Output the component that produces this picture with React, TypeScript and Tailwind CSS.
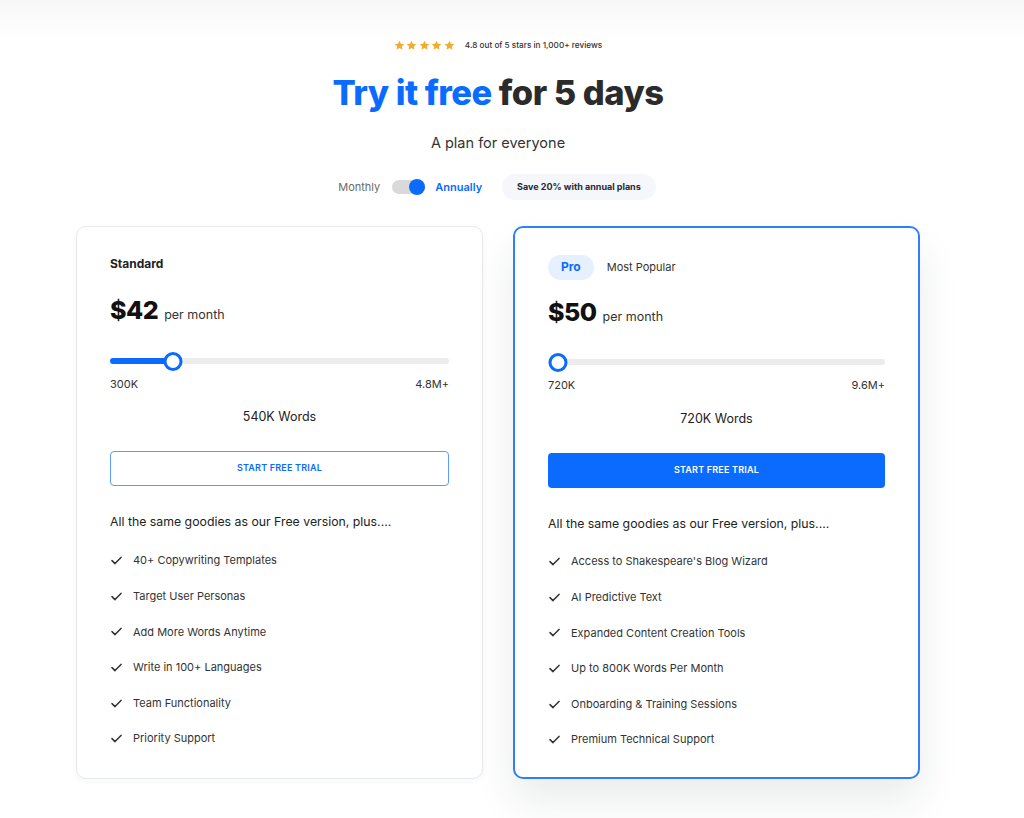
import React from "react";

function Star() {
  return (
    <svg width="11" height="11" viewBox="0 0 24 24" fill="#f7a928">
      <path d="M12 1.5l3.1 6.6 7.2.9-5.3 5 1.4 7.1L12 17.6 5.6 21.1 7 14 1.7 9l7.2-.9z" />
    </svg>
  );
}

function Check() {
  return (
    <svg width="11" height="9" viewBox="0 0 11 9" fill="none">
      <path d="M1 4.6l3 3 6-6.2" stroke="#333" strokeWidth="1.5" strokeLinecap="round" strokeLinejoin="round" />
    </svg>
  );
}

function Slider({ pct, min, max }: { pct: number; min: string; max: string }) {
  return (
    <div className="flex flex-col">
      <div className="relative h-[20px] flex items-center">
        <div className="w-full h-[6px] rounded-full bg-[#ececec]" />
        {pct > 0 && (
          <div className="absolute left-0 h-[6px] rounded-full bg-[#0b6bff]" style={{ width: `calc(${pct}% + 10px)` }} />
        )}
        <div
          className="absolute w-[19px] h-[19px] rounded-full bg-white border-[3px] border-[#0b6bff] -translate-x-1/2"
          style={{ left: `calc(${pct}% + 10px)` }}
        />
      </div>
      <div className="flex justify-between mt-[5px] text-[11px] text-[#333]">
        <span>{min}</span>
        <span>{max}</span>
      </div>
    </div>
  );
}

type Plan = {
  pro: boolean;
  price: string;
  pct: number;
  min: string;
  max: string;
  words: string;
  items: string[];
};

function Card({ p }: { p: Plan }) {
  return (
    <div
      className={
        p.pro
          ? "w-[407px] rounded-[10px] border-2 border-[#2f80f7] bg-white px-[33px] pt-[27px] pb-[19px] shadow-[0_22px_40px_rgba(30,40,60,0.09)]"
          : "w-[407px] rounded-[10px] border border-[#e6eaee] bg-white px-[33px] pt-[29px] pb-[21px] shadow-[0_2px_6px_rgba(30,40,60,0.04)]"
      }
    >
      {p.pro ? (
        <div className="flex items-center h-[25px]">
          <span className="h-[25px] px-[13px] rounded-full bg-[#e7f0fe] text-[#0b6bff] text-[12px] font-bold flex items-center">Pro</span>
          <span className="ml-[13px] text-[11px] text-[#333]">Most Popular</span>
        </div>
      ) : (
        <div className="h-[16px] flex items-center text-[12px] font-bold text-[#222]">Standard</div>
      )}
      <div className={p.pro ? "mt-[14px] flex items-baseline" : "mt-[20px] flex items-baseline"}>
        <span className="text-[25px] font-extrabold text-[#111] tracking-[-0.5px]">{p.price}</span>
        <span className="ml-[6px] text-[12.5px] text-[#333]">per month</span>
      </div>
      <div className={p.pro ? "mt-[21px]" : "mt-[22px]"}>
        <Slider pct={p.pct} min={p.min} max={p.max} />
      </div>
      <div className={p.pro ? "mt-[16px] text-center text-[12.5px] text-[#222]" : "mt-[15px] text-center text-[12.5px] text-[#222]"}>
        {p.words}
      </div>
      <button
        className={
          p.pro
            ? "mt-[24px] w-full h-[35px] rounded-[4px] bg-[#0b6bff] text-white text-[9px] font-semibold tracking-[0.2px]"
            : "mt-[24px] w-full h-[35px] rounded-[4px] border border-[#5a9bff] bg-white text-[#0b6bff] text-[9px] font-semibold tracking-[0.2px]"
        }
      >
        START FREE TRIAL
      </button>
      <div className="mt-[27px] text-[12.3px] text-[#222]">All the same goodies as our Free version, plus....</div>
      <ul className={p.pro ? "mt-[11px] flex flex-col" : "mt-[12px] flex flex-col"}>
        {p.items.map((t) => (
          <li key={t} className="h-[35.6px] flex items-center text-[11px] text-[#333]">
            <span className="w-[23px] flex justify-start pl-[1px]">
              <Check />
            </span>
            <span>{t}</span>
          </li>
        ))}
      </ul>
    </div>
  );
}

export default function App() {
  const standard: Plan = {
    pro: false,
    price: "$42",
    pct: 15.6,
    min: "300K",
    max: "4.8M+",
    words: "540K Words",
    items: [
      "40+ Copywriting Templates",
      "Target User Personas",
      "Add More Words Anytime",
      "Write in 100+ Languages",
      "Team Functionality",
      "Priority Support",
    ],
  };
  const pro: Plan = {
    pro: true,
    price: "$50",
    pct: 0,
    min: "720K",
    max: "9.6M+",
    words: "720K Words",
    items: [
      "Access to Shakespeare's Blog Wizard",
      "AI Predictive Text",
      "Expanded Content Creation Tools",
      "Up to 800K Words Per Month",
      "Onboarding & Training Sessions",
      "Premium Technical Support",
    ],
  };
  return (
    <div
      className="w-full min-h-[818px] bg-[linear-gradient(to_bottom,#f7f7f7_0px,#ffffff_40px)]"
      style={{ fontFamily: "Inter, 'Noto Sans', sans-serif" }}
    >
      <div className="w-[996px] flex flex-col items-center pt-[38px] pb-[40px]">
        <div className="flex items-center h-[14px]">
          <div className="flex gap-[1.5px]">
            <Star />
            <Star />
            <Star />
            <Star />
            <Star />
          </div>
          <span className="ml-[10px] text-[8.2px] text-[#333] font-medium">4.8 out of 5 stars in 1,000+ reviews</span>
        </div>
        <h1 className="mt-[19px] text-[34.5px] font-extrabold tracking-[-0.5px] leading-[44px] text-[#2b2b2b]">
          <span className="text-[#0b6bff]">Try it free</span> for 5 days
        </h1>
        <div className="mt-[17px] text-[14.5px] text-[#333]">A plan for everyone</div>
        <div className="mt-[20px] flex items-center h-[26px] -translate-x-[1px]">
          <span className="text-[11px] text-[#6b6b6b]">Monthly</span>
          <div className="ml-[12px] relative w-[33px] h-[14px] rounded-full bg-[#d9d9d9]">
            <div className="absolute right-0 top-[-1px] w-[16px] h-[16px] rounded-full bg-[#0b6bff]" />
          </div>
          <span className="ml-[10px] text-[11px] font-semibold text-[#0b6bff]">Annually</span>
          <span className="ml-[20px] h-[26px] px-[15px] rounded-full bg-[#f5f7fa] text-[9px] font-bold text-[#1e2a3b] flex items-center">
            Save 20% with annual plans
          </span>
        </div>
        <div className="mt-[26px] flex gap-[30px] items-start">
          <Card p={standard} />
          <Card p={pro} />
        </div>
      </div>
    </div>
  );
}
